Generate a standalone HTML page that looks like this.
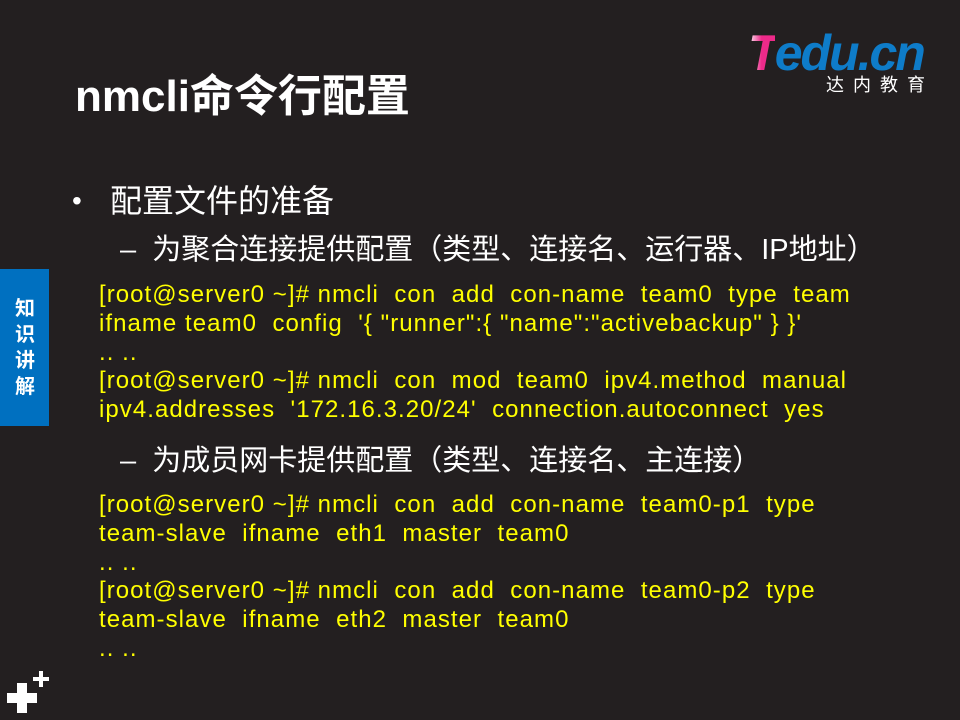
<!DOCTYPE html>
<html><head><meta charset="utf-8"><style>
body{margin:0;width:960px;height:720px;background:#231f20;position:relative;overflow:hidden;font-family:"Liberation Sans","Noto Sans CJK SC",sans-serif;color:#fff}
.a{position:absolute;white-space:nowrap}
.code{color:#ffff00;font-size:24px;letter-spacing:1.05px;line-height:28.8px;left:99px}
</style></head><body>
<div class="a" style="left:748px;top:23px;font-size:50px;font-weight:bold;font-style:italic;letter-spacing:-2px;color:#0e7cc9;line-height:60px"><span style="background:linear-gradient(90deg,#ffffff,#ee2a8a 50%);-webkit-background-clip:text;background-clip:text;color:transparent">T</span>edu.cn</div>
<div class="a" style="left:826px;top:74px;font-size:18px;letter-spacing:9px;line-height:22px">达内教育</div>
<div class="a" style="left:75px;top:70px;font-size:44px;font-weight:bold;line-height:54px">nmcli命令行配置</div>
<div style="position:absolute;left:0;top:269px;width:49px;height:157px;background:#0070c0"></div>
<div class="a" style="left:13px;top:296px;width:24px;font-size:20px;font-weight:bold;line-height:26px;white-space:normal;text-align:center">知识讲解</div>
<div class="a" style="left:72px;top:181px;font-size:28px;line-height:40px">•</div>
<div class="a" style="left:110px;top:181px;font-size:32px;line-height:40px">配置文件的准备</div>
<div class="a" style="left:120px;top:231px;font-size:29px;line-height:38px">–&nbsp;&nbsp;为聚合连接提供配置（类型、连接名、运行器、IP地址）</div>
<div class="a code" style="top:281px">[root@server0 ~]# nmcli&nbsp; con&nbsp; add&nbsp; con-name&nbsp; team0&nbsp; type&nbsp; team<br>ifname team0&nbsp; config&nbsp; '{ "runner":{ "name":"activebackup" } }'<br>.. ..<br>[root@server0 ~]# nmcli&nbsp; con&nbsp; mod&nbsp; team0&nbsp; ipv4.method&nbsp; manual<br>ipv4.addresses&nbsp; '172.16.3.20/24'&nbsp; connection.autoconnect&nbsp; yes</div>
<div class="a" style="left:120px;top:442px;font-size:29px;line-height:38px">–&nbsp;&nbsp;为成员网卡提供配置（类型、连接名、主连接）</div>
<div class="a code" style="top:491px">[root@server0 ~]# nmcli&nbsp; con&nbsp; add&nbsp; con-name&nbsp; team0-p1&nbsp; type<br>team-slave&nbsp; ifname&nbsp; eth1&nbsp; master&nbsp; team0<br>.. ..<br>[root@server0 ~]# nmcli&nbsp; con&nbsp; add&nbsp; con-name&nbsp; team0-p2&nbsp; type<br>team-slave&nbsp; ifname&nbsp; eth2&nbsp; master&nbsp; team0<br>.. ..</div>
<svg class="a" style="left:0;top:0" width="960" height="720"><path fill="#fff" d="M7 693h10v-10h10v10h10v10h-10v10h-10v-10h-10z"/><path fill="#fff" d="M33 677h6v-6h4v6h6v4h-6v6h-4v-6h-6z"/></svg>
</body></html>
